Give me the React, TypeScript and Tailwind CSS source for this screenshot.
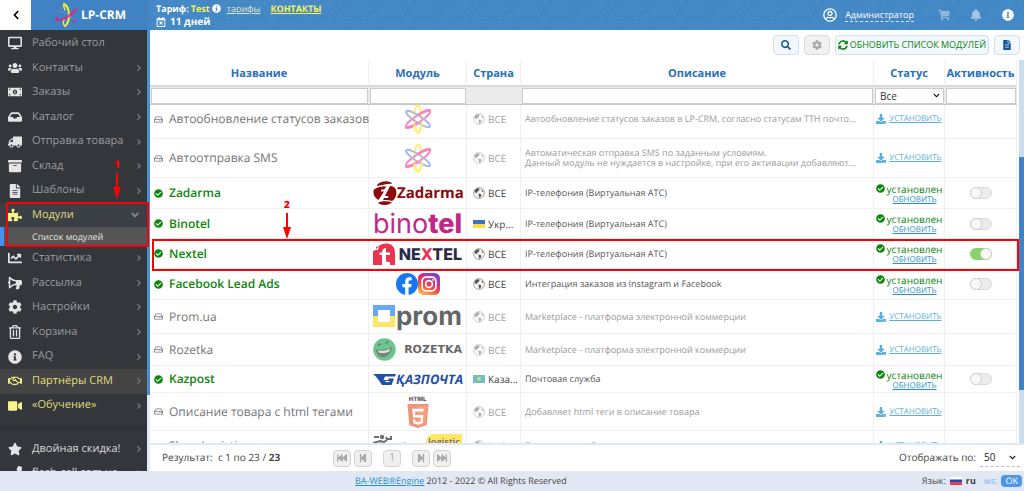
import React, { useState } from 'react';
import {
  FaAngleDown, FaAngleRight, FaArchive, FaBell, FaBullhorn, FaChartLine, FaCheckCircle,
  FaChevronDown, FaChevronLeft, FaCog, FaDesktop, FaDownload, FaFastBackward, FaFastForward,
  FaFileAlt, FaInbox, FaInfoCircle, FaMoneyBillAlt, FaPhone, FaPuzzlePiece, FaRegCalendarTimes,
  FaRegHandshake, FaRegHdd, FaRegTrashAlt, FaRegUserCircle, FaSearch, FaShoppingCart, FaStar,
  FaStepBackward, FaStepForward, FaSyncAlt, FaTruck, FaUsers, FaVideo,
} from 'react-icons/fa';
import type { IconType } from 'react-icons';
import clsx from 'clsx';

interface NavItem {
  icon: IconType;
  label: string;
  flip?: boolean;
  plain?: boolean;
  tone?: 'yellow' | 'partner' | 'white';
}

interface ModuleRow {
  name: string;
  logo: React.ReactNode;
  country: 'all' | 'ua' | 'kz';
  text: React.ReactNode;
  installed: boolean;
  active?: boolean;
  height: string;
}

const topNav: NavItem[] = [
  { icon: FaDesktop, label: 'Рабочий стол', plain: true },
  { icon: FaUsers, label: 'Контакты' },
  { icon: FaMoneyBillAlt, label: 'Заказы' },
  { icon: FaInbox, label: 'Каталог' },
  { icon: FaTruck, label: 'Отправка товара', flip: true },
  { icon: FaArchive, label: 'Склад' },
  { icon: FaFileAlt, label: 'Шаблоны' },
];

const bottomNav: NavItem[] = [
  { icon: FaChartLine, label: 'Статистика' },
  { icon: FaBullhorn, label: 'Рассылка', flip: true },
  { icon: FaCog, label: 'Настройки' },
  { icon: FaRegTrashAlt, label: 'Корзина' },
  { icon: FaInfoCircle, label: 'FAQ' },
  { icon: FaRegHandshake, label: 'Партнёры CRM', tone: 'partner' },
  { icon: FaVideo, label: '«Обучение»', tone: 'yellow' },
];

const extraNav: NavItem[] = [
  { icon: FaStar, label: 'Двойная скидка!', tone: 'white' },
  { icon: FaPhone, label: 'flesh-cell.com.ua', tone: 'white' },
];

function NavLink({ item }: { item: NavItem }) {
  const Icon = item.icon;
  const yellow = item.tone === 'yellow' || item.tone === 'partner';
  return (
    <a
      href="#"
      className={clsx(
        'flex min-h-0 flex-1 items-center pl-2 pr-1 text-[11px]',
        item.tone === 'partner' && 'bg-[#444444]',
        yellow ? 'text-[#e0dc7c]' : item.tone === 'white' ? 'text-[#d8d8d8]' : 'text-[#999b9e]',
      )}
    >
      <span className="flex w-6 shrink-0">
        <Icon className={clsx('h-[14px] w-[14px]', item.flip && '-scale-x-100', yellow ? 'text-[#f8f38d]' : 'text-[#e4e4e4]')} />
      </span>
      <span className="flex-1 whitespace-nowrap">{item.label}</span>
      {!item.plain && <FaAngleRight className="h-[10px] w-2 text-[#6d7074]" />}
    </a>
  );
}

function Atom({ className }: { className?: string }) {
  return (
    <svg viewBox="0 0 30 32" className={className} fill="none" strokeWidth="2">
      <ellipse cx="15" cy="16" rx="4" ry="14.500" stroke="#ffe916" />
      <ellipse cx="15" cy="16" rx="3.600" ry="15" stroke="#ff2f92" transform="rotate(57 15 16)" />
      <ellipse cx="15" cy="16" rx="3.600" ry="15" stroke="#6f8ad8" transform="rotate(-57 15 16)" />
      <path d="M1.500 24.500c1.500 2 8-.5 14-4.500M28.500 7.500c-1.500-2-8 .5-14 4.500" stroke="#ff2f92" strokeWidth="2.800" />
      <path d="M11.300 22c.7 5 2 8.300 3.700 8.300s3-3 3.700-8.300" stroke="#ffe916" strokeWidth="2.800" />
    </svg>
  );
}

function BrandMark() {
  return (
    <svg viewBox="0 0 22 24" className="h-6 w-[22px]" fill="none" strokeLinecap="round">
      <path d="M9 1C12 2 14 7 14 12c0 5-1 9-4 11" stroke="#f6ee3a" strokeWidth="2" />
      <path d="M9 1c-1 2 0 4 1 6M10 23c-2-1-2-4-1-6" stroke="#f6ee3a" strokeWidth="1.300" />
      <path d="M21 6C18 11 8 18 2 17c-1 0-1-1 0-2" stroke="#ea1f8a" strokeWidth="2" />
      <path d="M2 8c4-1 12 3 17 9" stroke="#7d86c8" strokeWidth="1" />
      <path d="M19 17c1 1 1 2-1 2" stroke="#ea1f8a" strokeWidth="1.200" />
    </svg>
  );
}

function ZadarmaLogo() {
  return (
    <div className="flex items-center justify-between text-[#8b0a0e]">
      <svg viewBox="0 0 24 24" className="h-6 w-6 shrink-0" fill="currentColor">
        <path d="M4 4C8-.5 16-.6 19.500 2.500L13 3.300 4 5z" />
        <path d="M1 8.500C4 6 8 5.500 13.500 5.500L11 8.500H8.500L8 10.500h3L5.500 19C1 16.500-.5 12 1 8.500z" />
        <path d="M17 5c3 .3 5 1 6 4 1.500 5-1 9-4 11-3-1-6-1-9-.800L11 17h4l.5-2H12z" />
        <path d="M5 21.800c5-2 10-1.800 14-.3-4 3.300-11 3.300-14 .3z" />
      </svg>
      <span className="text-[15px] font-bold leading-6">Zadarma</span>
    </div>
  );
}

function BinotelLogo() {
  return (
    <div className="flex justify-center font-[Inter,sans-serif] text-[27px] leading-6 text-[#c0288a]">
      bino<span className="font-extrabold">tel</span>
    </div>
  );
}

function NextelLogo() {
  return (
    <div className="flex items-center justify-between">
      <svg viewBox="0 0 22 22" className="h-[22px] w-[22px] shrink-0">
        <path d="M0 22V8l3-1V4l3-1C9-.5 22-2 22 10v12z" fill="#e9344f" />
        <path d="M2 7l4-4-1 4z" fill="#fff" />
        <path d="M9 22V12H6.500V9.500H9C9.200 6.500 10.500 5 13 5v4.500h4V12h-4v5c0 1.500 1 2 2.500 2H17v3z" fill="#fff" />
      </svg>
      <span className="font-[Inter,sans-serif] text-base font-extrabold leading-6 text-[#272c45]">
        NE<span className="text-[#e9344f]">X</span>TEL
      </span>
    </div>
  );
}

function SocialLogo() {
  return (
    <div className="flex justify-center">
      <svg viewBox="0 0 24 24" className="h-[22px] w-[22px]">
        <circle cx="12" cy="12" r="12" fill="#1877f2" />
        <path d="M10 24v-8.500H7V12h3V9.300C10 6.300 11.800 4.700 14.500 4.700c1.300 0 2.600.2 2.600.2v3h-1.500c-1.500 0-1.900.9-1.900 1.800V12H17l-.5 3.500h-2.800V24z" fill="#fff" />
      </svg>
      <svg viewBox="0 0 24 24" className="h-[22px] w-[22px]" fill="none">
        <defs>
          <linearGradient id="insta" x1="0.200" y1="1" x2="0.700" y2="0">
            <stop offset="0" stopColor="#fdc04f" />
            <stop offset="0.350" stopColor="#f4593b" />
            <stop offset="0.600" stopColor="#d9317a" />
            <stop offset="1" stopColor="#7a3fd0" />
          </linearGradient>
        </defs>
        <rect width="24" height="24" rx="6" fill="url(#insta)" />
        <rect x="4.500" y="4.500" width="15" height="15" rx="4.500" stroke="#fff" strokeWidth="1.800" />
        <circle cx="12" cy="12" r="3.700" stroke="#fff" strokeWidth="1.800" />
        <circle cx="16.500" cy="7.500" r="1" fill="#fff" />
      </svg>
    </div>
  );
}

function PromLogo() {
  return (
    <div className="flex items-start justify-between">
      <svg viewBox="0 0 22 22" className="h-[22px] w-[22px] shrink-0">
        <path d="M0 0h22v11H0z" fill="#0a6cf0" />
        <path d="M0 11h22v11H0z" fill="#ffd500" />
        <path d="M5 5h12v12H5z" fill="#fff" />
      </svg>
      <span className="font-[Inter,sans-serif] text-[26px] font-bold leading-6 text-black">prom</span>
    </div>
  );
}

function RozetkaLogo() {
  return (
    <div className="flex items-center justify-between">
      <svg viewBox="0 0 24 24" className="h-[23px] w-[23px] shrink-0">
        <circle cx="12" cy="12" r="11.700" fill="#0a9f45" />
        <path d="M3 12c5 1 11 0 17-3-1 7-5 11-10 11-4 0-7-4-7-8z" fill="#1b3524" />
        <path d="M5 13c5 1 9 0 13-2l-1 3c-4 2-8 2-11 1z" fill="#b9d8c4" />
        <path d="M5 8l3-2M13 6l3-2.500" stroke="#1b3524" strokeWidth="1.800" />
      </svg>
      <span className="font-['DejaVu_Sans',sans-serif] text-[11px] font-bold leading-5 text-black">ROZETKA</span>
    </div>
  );
}

function KazpostLogo() {
  return (
    <div className="flex items-center justify-between text-[#1e50a8]">
      <svg viewBox="0 0 23 11" className="h-[11px] w-[23px] shrink-0" fill="currentColor">
        <path d="M0 0h23l-1 2.500H12L10.500 6H15l.7-1.500H21L18.500 11H9C7 8 4 3 0 0z" />
        <path d="M12.500 7.500h4" stroke="#fff" strokeWidth="1.200" />
      </svg>
      <span className="text-[13px] font-bold italic leading-5">ҚАЗПОЧТА</span>
    </div>
  );
}

function HtmlLogo() {
  return (
    <div className="flex flex-col items-center">
      <span className="font-[Inter,sans-serif] text-[6px] font-black leading-2 text-black">HTML</span>
      <svg viewBox="0 0 22 25" className="h-6 w-[22px]">
        <path d="M0 0h22l-2 22.200L11 25l-9-2.800z" fill="#e44d26" />
        <path d="M11 2h9l-1.700 18.800L11 23z" fill="#f16529" />
        <path d="M17 5H5l.9 9h8.200l-.3 4-2.800.8-2.800-.8-.2-2H5.800l.4 4 4.800 1.500 4.800-1.500.7-8.500H8.200L8 7.800h8.800z" fill="#fff" />
      </svg>
    </div>
  );
}

function ShopLogisticLogo() {
  return (
    <div className="flex items-start justify-between">
      <svg viewBox="0 0 20 24" className="h-6 w-5 shrink-0" fill="none" stroke="#111" strokeWidth="2">
        <circle cx="9" cy="3" r="2.200" fill="#111" stroke="none" />
        <path d="M1 3h5M0 9l7-2 4 1 3-2M13 3l1 2h4V2M9 8l-4 6 6 4M6 14l-5 4" />
        <path d="M8 9l4 2" stroke="#ffd800" />
      </svg>
      <span className="pt-1 text-[10px] font-bold leading-4 text-black">Shop</span>
      <span className="rounded-tl-lg bg-[#ffd800] px-[2px] text-[9px] font-bold leading-4 text-[#222]">logistic</span>
    </div>
  );
}

function Country({ code }: { code: ModuleRow['country'] }) {
  if (code === 'ua') {
    return (
      <svg viewBox="0 0 12 8" className="h-2 w-3 shrink-0">
        <path d="M0 0h12v4H0z" fill="#3572cf" />
        <path d="M0 4h12v4H0z" fill="#ffdc46" />
      </svg>
    );
  }
  if (code === 'kz') {
    return (
      <svg viewBox="0 0 12 8" className="h-2 w-3 shrink-0">
        <path d="M0 0h12v8H0z" fill="#6fbec9" />
        <circle cx="6" cy="3.800" r="2" fill="#d5d95c" />
      </svg>
    );
  }
  return (
    <svg viewBox="0 0 12 12" className="h-3 w-3 shrink-0">
      <circle cx="6" cy="6" r="5.400" fill="#f4f4f4" stroke="#a5a5a5" strokeWidth="1" />
      <path d="M1.500 3.500L4 1.200l2.600.6L6 3.500 4.500 4.500 4 6 2 5.500zM5.500 6.500l2.500.8.300 1.500L6.600 11 5.800 9zM8.500 2l2 2.500-1.500.2z" fill="#555" />
    </svg>
  );
}

const modules: ModuleRow[] = [
  { name: 'Автообновление статусов заказов', logo: <Atom className="mx-auto h-[30px] w-[28px]" />, country: 'all', installed: false, height: 'h-[39px]', text: 'Автообновление статусов заказов в LP-CRM, согласно статусам ТТН почто...' },
  { name: 'Автоотправка SMS', logo: <Atom className="mx-auto h-[30px] w-[28px]" />, country: 'all', installed: false, height: 'h-[39px]', text: <>Автоматическая отправка SMS по заданным условиям.<br />Данный модуль не нуждается в настройке, при его активации добавляют...</> },
  { name: 'Zadarma', logo: <ZadarmaLogo />, country: 'all', installed: true, height: 'h-[31px]', text: 'IP-телефония (Виртуальная АТС)' },
  { name: 'Binotel', logo: <BinotelLogo />, country: 'ua', installed: true, height: 'h-[30px]', text: 'IP-телефония (Виртуальная АТС)' },
  { name: 'Nextel', logo: <NextelLogo />, country: 'all', installed: true, active: true, height: 'h-[30px]', text: 'IP-телефония (Виртуальная АТС)' },
  { name: 'Facebook Lead Ads', logo: <SocialLogo />, country: 'all', installed: true, height: 'h-[31px]', text: 'Интеграция заказов из Instagram и Facebook' },
  { name: 'Prom.ua', logo: <PromLogo />, country: 'all', installed: false, height: 'h-[34px]', text: 'Marketplace - платформа электронной коммерции' },
  { name: 'Rozetka', logo: <RozetkaLogo />, country: 'all', installed: false, height: 'h-8', text: 'Marketplace - платформа электронной коммерции' },
  { name: 'Kazpost', logo: <KazpostLogo />, country: 'kz', installed: true, height: 'h-[27px]', text: 'Почтовая служба' },
  { name: 'Описание товара с html тегами', logo: <HtmlLogo />, country: 'all', installed: false, height: 'h-[38px]', text: 'Добавляет html теги в описание товара' },
  { name: 'Shop-Logistics', logo: <ShopLogisticLogo />, country: 'all', installed: false, height: 'h-[31px]', text: 'Почтовая служба' },
];

const countryLabels = { all: 'ВСЕ', ua: 'Укр...', kz: 'Каза...' };

function Columns() {
  return (
    <colgroup>
      <col className="w-[219px]" />
      <col className="w-[98px]" />
      <col className="w-[54px]" />
      <col />
      <col className="w-[71px]" />
      <col className="w-[72px]" />
    </colgroup>
  );
}

function ModuleTableRow({ row }: { row: ModuleRow }) {
  const [active, setActive] = useState(!!row.active);
  const dim = !row.installed;
  const cell = 'border-b border-r border-[#f0f0f0] p-0 align-middle';

  return (
    <tr className={row.height}>
      <td className={cell}>
        <div className={clsx('flex items-center gap-[6px] whitespace-nowrap pl-1 text-xs leading-4', dim ? 'text-[#757575]' : 'font-semibold text-[#0c860c]')}>
          {dim ? <FaRegHdd className="h-[9px] w-[9px] shrink-0" /> : <FaCheckCircle className="h-[9px] w-[9px] shrink-0" />}
          {row.name}
        </div>
      </td>
      <td className={cell}>
        <div className={clsx('px-1', dim && 'opacity-60')}>{row.logo}</div>
      </td>
      <td className={cell}>
        <div className={clsx('flex items-center gap-[3px] whitespace-nowrap pl-[6px] text-[10px] leading-4 text-[#444]', dim && 'opacity-50')}>
          <Country code={row.country} />
          <span>{countryLabels[row.country]}</span>
        </div>
      </td>
      <td className={cell}>
        <div className={clsx('truncate py-[2px] pl-1 pr-[6px] text-[9px] leading-[10px]', dim ? 'text-[#9a9a9a]' : 'text-[#555]')}>{row.text}</div>
      </td>
      <td className={cell}>
        {row.installed ? (
          <div className="flex justify-center gap-[2px] text-[#0c860c]">
            <FaCheckCircle className="mt-px h-[9px] w-[9px] shrink-0" />
            <div className="flex flex-col items-center">
              <span className="text-[10px] leading-3">установлен</span>
              <a href="#" className="text-[8px] leading-[9px] text-[#2a8fc9] underline">ОБНОВИТЬ</a>
            </div>
          </div>
        ) : (
          <a href="#" className="flex items-center justify-center gap-[3px] text-[#5ab0dc]">
            <FaDownload className="h-[10px] w-[10px] shrink-0" />
            <span className="text-[8px] leading-3 underline">УСТАНОВИТЬ</span>
          </a>
        )}
      </td>
      <td className={cell}>
        {row.installed && (
          <label className="relative mx-auto block h-3 w-[22px]">
            <span className="sr-only">{row.name}</span>
            <input
              type="checkbox"
              checked={active}
              onChange={() => setActive(!active)}
              className="peer block h-3 w-[22px] appearance-none rounded-full border border-[#dcdcdc] bg-[#ececec] checked:border-[#8ccf6a] checked:bg-[#8ad36a]"
            />
            <span className="pointer-events-none absolute left-0 top-0 h-3 w-3 rounded-full border border-[#cfcfcf] bg-[#f8f8f8] peer-checked:left-auto peer-checked:right-0" />
          </label>
        )}
      </td>
    </tr>
  );
}

function Marker({ label }: { label: string }) {
  return (
    <div className="flex flex-col items-center text-[#ff0000]">
      <span className="text-[10px] font-extrabold leading-[14px]">{label}</span>
      <svg viewBox="0 0 8 28" className="h-7 w-2" fill="currentColor">
        <path d="M3 2h2v14h3L4 28 0 16h3z" />
      </svg>
    </div>
  );
}

const headButton = 'flex h-5 items-center justify-center rounded-sm border border-[#cfe0ee] bg-[#f2f8fd]';
const pagerButton = 'flex h-[17px] w-[18px] items-center justify-center rounded-sm border border-[#d2d2d2] bg-[#f0f0f0] text-[#aaa]';
const filterInput = 'block h-4 w-full border border-[#cbcbcb] bg-white px-1 text-[10px]';

export default function App() {
  const [status, setStatus] = useState('Все');
  const [perPage, setPerPage] = useState('50');

  return (
    <div className="flex h-screen flex-col overflow-hidden bg-white font-['Open_Sans',sans-serif] text-xs text-[#444] [text-rendering:geometricPrecision]">
      {/* Header */}
      <header className="relative flex h-[30px] shrink-0 bg-[#458ac7] text-white">
        <svg className="absolute inset-0 h-full w-full" aria-hidden="true">
          <defs>
            <pattern id="hex" width="34" height="20" patternUnits="userSpaceOnUse">
              <path d="M0 10L6 0h22l6 10-6 10H6zM3 10L8 2M7 10l4-7M28 20l-5-9M31 15l-5-9M6 20h22M9 17h14" fill="none" stroke="#2d6ea8" strokeOpacity="0.350" strokeWidth="0.700" />
            </pattern>
          </defs>
          <rect width="100%" height="100%" fill="url(#hex)" />
        </svg>
        <button aria-label="Назад" className="relative flex w-[31px] items-center justify-center bg-white text-black">
          <FaChevronLeft className="h-[10px] w-[10px]" />
        </button>
        <a href="#" className="relative flex w-[117px] items-center gap-1 bg-[#4083c4] pl-6">
          <BrandMark />
          <span className="text-xs font-bold leading-5">LP-CRM</span>
        </a>
        <div className="relative flex flex-1 items-center justify-between pl-2 pr-[10px]">
          <div className="font-bold leading-[13px]">
            <div className="flex items-center gap-[2px] text-[9px]">
              <span>Тариф:</span>
              <span className="text-[#f8f35c]">Test</span>
              <FaInfoCircle className="h-[9px] w-[9px]" />
              <a href="#" className="ml-1 font-normal text-[#dfe8cf] underline">тарифы</a>
              <a href="#" className="ml-2 text-[#f8f35c] underline">КОНТАКТЫ</a>
            </div>
            <div className="flex items-center gap-1 text-[10px]">
              <FaRegCalendarTimes className="h-[10px] w-[10px]" />
              <span>11 дней</span>
            </div>
          </div>
          <div className="flex items-center">
            <FaRegUserCircle className="h-[14px] w-[14px]" />
            <a href="#" className="ml-2 border-b border-dashed border-white/80 text-[9px] leading-[13px]">Администратор</a>
            <FaShoppingCart className="ml-6 h-3 w-3 text-white/40" />
            <FaBell className="ml-5 h-3 w-3 text-white/50" />
            <FaInfoCircle className="ml-5 h-3 w-3" />
          </div>
        </div>
      </header>

      <div className="flex min-h-0 flex-1">
        {/* Sidebar */}
        <aside className="flex w-[147px] shrink-0 flex-col bg-[#33363b]">
          <nav className="flex min-h-0 flex-1 flex-col pt-px">
            {topNav.map((item) => <NavLink key={item.label} item={item} />)}
            <div className="relative bg-[#3b4046]">
              <a href="#" className="flex h-6 items-center pl-2 pr-[6px] text-[11px] text-[#e0dc7c]">
                <span className="flex w-6"><FaPuzzlePiece className="h-[14px] w-[14px] text-[#f8f38d]" /></span>
                <span className="flex-1">Модули</span>
                <FaAngleDown className="h-3 w-3 text-[#84878a]" />
              </a>
              <a href="#" className="flex h-[19px] items-center border-l-4 border-[#4a90f0] bg-[#555] pl-7 text-[9px] text-[#e6e6e6]">
                Список модулей
              </a>
              <div className="pointer-events-none absolute -right-[2px] -bottom-px -top-px left-[6px] z-10 border-2 border-[#ff0000]" />
              <div className="pointer-events-none absolute bottom-full right-[26px] z-10 pb-1"><Marker label="1" /></div>
            </div>
            {bottomNav.map((item) => <NavLink key={item.label} item={item} />)}
          </nav>
          <div className="mt-[7px] flex h-[46px] shrink-0 flex-col overflow-hidden border-t-[6px] border-[#303238] pt-[6px]">
            {extraNav.map((item) => (
              <div key={item.label} className="flex h-6 shrink-0"><NavLink item={item} /></div>
            ))}
          </div>
        </aside>

        <div className="w-[3px] shrink-0 bg-[#e2ebf6] pb-[76px]">
          <div className="h-full bg-[#4a8fd2]" />
        </div>

        {/* Content */}
        <main className="flex min-w-0 flex-1 flex-col">
          <div className="flex h-[30px] shrink-0 items-center justify-end gap-[5px] pr-1">
            <button aria-label="Поиск" className={clsx(headButton, 'w-[26px] text-[#14549f]')}><FaSearch className="h-[10px] w-[10px]" /></button>
            <button aria-label="Настройки" className="flex h-5 w-[26px] items-center justify-center rounded-sm border border-[#dcdcdc] bg-[#f1f1f1] text-[#aaa]"><FaCog className="h-[10px] w-[10px]" /></button>
            <button className={clsx(headButton, 'gap-[2px] px-[2px] text-[9px] text-[#0c860c]')}>
              <FaSyncAlt className="h-[10px] w-[10px]" />
              ОБНОВИТЬ СПИСОК МОДУЛЕЙ
            </button>
            <button aria-label="Отчёт" className={clsx(headButton, 'w-[26px] text-[#14549f]')}><FaFileAlt className="h-[10px] w-[10px]" /></button>
          </div>

          <div className="relative flex min-h-0 flex-1 justify-between">
            <div className="flex min-w-0 flex-1 flex-col pr-[2px]">
              <table className="w-full shrink-0 table-fixed border-separate border-spacing-0">
                <Columns />
                <thead>
                  <tr className="h-[27px] text-[11px] text-[#2770b5]">
                    {['Название', 'Модуль', 'Страна', 'Описание', 'Статус', 'Активность'].map((title) => (
                      <th key={title} className="border-b-2 border-r border-b-[#d6d9d9] border-r-[#f0f0f0] px-0 pb-0 pt-1 font-bold">{title}</th>
                    ))}
                  </tr>
                  <tr className="h-[18px] bg-[#ebebeb]">
                    <td className="border-b border-[#c8c8c8] px-px py-0"><input aria-label="Название" className={filterInput} /></td>
                    <td className="border-b border-[#c8c8c8] px-px py-0"><input aria-label="Модуль" className={filterInput} /></td>
                    <td className="border-b border-[#c8c8c8] p-0" />
                    <td className="border-b border-[#c8c8c8] px-px py-0"><input aria-label="Описание" className={filterInput} /></td>
                    <td className="border-b border-[#c8c8c8] px-px py-0">
                      <div className="relative">
                        <select aria-label="Статус" value={status} onChange={(e) => setStatus(e.target.value)} className="block h-4 w-full appearance-none border border-[#cbcbcb] bg-white px-1 text-[10px] leading-3 text-[#333]">
                          <option>Все</option>
                          <option>Установлен</option>
                        </select>
                        <FaChevronDown className="pointer-events-none absolute right-1 top-1 h-[7px] w-[7px] text-black" />
                      </div>
                    </td>
                    <td className="border-b border-[#c8c8c8] px-px py-0"><input aria-label="Активность" className={filterInput} /></td>
                  </tr>
                </thead>
              </table>
              <div className="min-h-0 flex-1 overflow-hidden">
                <table className="-mt-[5px] w-full table-fixed border-separate border-spacing-0">
                  <Columns />
                  <tbody>
                    {modules.map((row) => <ModuleTableRow key={row.name} row={row} />)}
                  </tbody>
                </table>
              </div>
            </div>
            <div className="flex w-[5px] shrink-0 flex-col bg-[#c9dff0] pt-[97px] pb-[53px]">
              <div className="flex-1 bg-[#4083c4]" />
            </div>
            {/* Step 2 highlight over the Nextel row */}
            <div className="pointer-events-none absolute left-[2px] right-[5px] top-[179px] h-[32px] border-2 border-[#ff0000]" />
            <div className="pointer-events-none absolute left-[133px] top-[137px]"><Marker label="2" /></div>
          </div>

          {/* Pager */}
          <div className="flex h-7 shrink-0 items-center border-t-2 border-[#dde9f5] pl-3 pr-1 text-[10px]">
            <span className="w-[171px]">Результат:&nbsp; с 1 по 23 / <b>23</b></span>
            <div className="flex items-center gap-[3px]">
              <button aria-label="Первая" className={pagerButton}><FaFastBackward className="h-[10px] w-[10px]" /></button>
              <button aria-label="Предыдущая" className={pagerButton}><FaStepBackward className="h-[10px] w-[10px]" /></button>
              <button className={clsx(pagerButton, 'mx-2 text-[10px]')}>1</button>
              <button aria-label="Следующая" className={pagerButton}><FaStepForward className="h-[10px] w-[10px]" /></button>
              <button aria-label="Последняя" className={pagerButton}><FaFastForward className="h-[10px] w-[10px]" /></button>
            </div>
            <label className="ml-auto flex items-center gap-1">
              Отображать по:
              <span className="relative border-b border-dashed border-[#bbb]">
                <select value={perPage} onChange={(e) => setPerPage(e.target.value)} className="block h-4 w-10 appearance-none bg-transparent pl-1 text-[10px] text-[#222]">
                  <option>50</option>
                  <option>100</option>
                </select>
                <FaChevronDown className="pointer-events-none absolute right-1 top-1 h-[7px] w-[7px] text-black" />
              </span>
            </label>
          </div>
        </main>
      </div>

      {/* Footer */}
      <footer className="flex h-5 shrink-0 items-center bg-[#e1e8f4] pr-[2px] text-[9px]">
        <div className="flex-1 text-center">
          <a href="#" className="text-[#2a8fc9] underline">BA-WEB®Engine</a> 2012 - 2022 © All Rights Reserved
        </div>
        <div className="flex items-center gap-1">
          <span>Язык:</span>
          <svg viewBox="0 0 12 8" className="h-2 w-3">
            <path d="M0 0h12v3H0z" fill="#fff" />
            <path d="M0 2.500h12v3H0z" fill="#2b46a8" />
            <path d="M0 5.300h12V8H0z" fill="#ea3b3f" />
          </svg>
          <b>ru</b>
          <span className="ml-1 text-[#7fb2f0]">ws:</span>
          <span className="rounded-sm bg-[#4a96e8] px-1 leading-3 text-white">OK</span>
        </div>
      </footer>
    </div>
  );
}
